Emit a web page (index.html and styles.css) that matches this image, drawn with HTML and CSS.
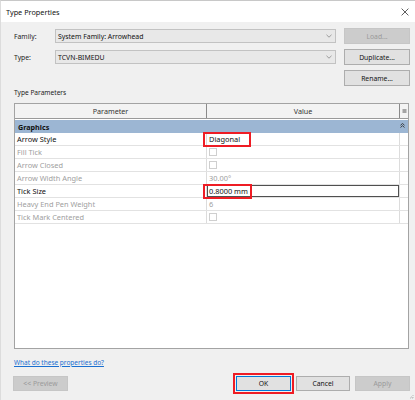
FILE: index.html
```html
<!DOCTYPE html>
<html>
<head>
<meta charset="utf-8">
<link rel="stylesheet" href="styles.css">
</head>
<body>
<div class="dialog">
  <div class="titlebar">
    <span class="title">Type Properties</span>
    <svg class="close" width="8" height="8" viewBox="0 0 8 8"><path d="M0.6 0.6 L7.4 7.4 M7.4 0.6 L0.6 7.4" stroke="#333" stroke-width="0.8" fill="none"/></svg>
  </div>

  <div class="top">
    <div class="row">
      <span class="lbl">Family:</span>
      <div class="combo"><span>System Family: Arrowhead</span><svg class="chev" width="6" height="4" viewBox="0 0 6 4"><path d="M0.5 0.8 L3 3.2 L5.5 0.8" stroke="#888" stroke-width="0.8" fill="none"/></svg></div>
      <div class="btn disabled">Load...</div>
    </div>
    <div class="row">
      <span class="lbl">Type:</span>
      <div class="combo"><span>TCVN-BIMEDU</span><svg class="chev" width="6" height="4" viewBox="0 0 6 4"><path d="M0.5 0.8 L3 3.2 L5.5 0.8" stroke="#888" stroke-width="0.8" fill="none"/></svg></div>
      <div class="btn">Duplicate...</div>
    </div>
    <div class="row">
      <span class="spacer"></span>
      <div class="btn">Rename...</div>
    </div>
  </div>

  <div class="section-label">Type Parameters</div>

  <div class="table">
    <div class="thead">
      <div class="c1">Parameter</div>
      <div class="c2">Value</div>
      <div class="c3"><svg width="5" height="4" viewBox="0 0 5 4"><path d="M0.5 1 H4.5 M0.5 3 H4.5" stroke="#444" stroke-width="0.9"/></svg></div>
    </div>
    <div class="group">
      <span>Graphics</span>
      <svg class="collapse" width="5" height="5" viewBox="0 0 5 5"><path d="M0.5 2.3 L2.5 0.5 L4.5 2.3 M0.5 4.5 L2.5 2.7 L4.5 4.5" stroke="#333" stroke-width="0.9" fill="none"/></svg>
    </div>
    <div class="tr">
      <div class="c1">Arrow Style</div>
      <div class="c2"><span class="mark m1"></span>Diagonal</div>
      <div class="c3"></div>
    </div>
    <div class="tr dis">
      <div class="c1">Fill Tick</div>
      <div class="c2"><span class="chk"></span></div>
      <div class="c3"></div>
    </div>
    <div class="tr dis">
      <div class="c1">Arrow Closed</div>
      <div class="c2"><span class="chk"></span></div>
      <div class="c3"></div>
    </div>
    <div class="tr dis">
      <div class="c1">Arrow Width Angle</div>
      <div class="c2">30.00°</div>
      <div class="c3"></div>
    </div>
    <div class="tr">
      <div class="c1">Tick Size</div>
      <div class="c2 edit"><span class="mark m2"></span>0.8000 mm</div>
      <div class="c3"></div>
    </div>
    <div class="tr dis">
      <div class="c1">Heavy End Pen Weight</div>
      <div class="c2">6</div>
      <div class="c3"></div>
    </div>
    <div class="tr dis">
      <div class="c1">Tick Mark Centered</div>
      <div class="c2"><span class="chk"></span></div>
      <div class="c3"></div>
    </div>
  </div>

  <a class="help" href="#">What do these properties do?</a>

  <div class="footer">
    <div class="btn disabled preview">&lt;&lt; Preview</div>
    <span class="spacer"></span>
    <div class="btn ok">OK</div>
    <div class="btn cancel">Cancel</div>
    <div class="btn disabled apply">Apply</div>
  </div>
  <svg class="grip" width="5" height="5" viewBox="0 0 5 5"><path d="M4 1 L4 2 M2 3 L3 3 M4 3 L4 4 M1 4 L2 4 M3 4 L4 4" stroke="#aaa" stroke-width="0.8"/></svg>
</div>
</body>
</html>
```

FILE: styles.css
```css
* { box-sizing: border-box; }
html, body {
  margin: 0;
  padding: 0;
  width: 415px;
  height: 400px;
  overflow: hidden;
  background: #f0f0f0;
}
.dialog {
  position: relative;
  width: 415px;
  height: 400px;
  background: #f0f0f0;
  font-family: "Noto Sans", "Liberation Sans", sans-serif;
  font-size: 7px;
  color: #1a1a1a;
  border-top: 1px solid #c8c8c8;
  border-left: 1px solid #dcdcdc;
  display: flex;
  flex-direction: column;
}
.titlebar {
  height: 21px;
  background: #ffffff;
  display: flex;
  align-items: center;
  justify-content: space-between;
  padding: 0 6px 0 5px;
}
.title {
  font-size: 7.3px;
  color: #111;
}
.close { display: block; margin-top: 1px; }

.top {
  padding: 6px 5px 0 13px;
  display: flex;
  flex-direction: column;
  gap: 5px;
}
.row {
  height: 16px;
  display: flex;
  align-items: center;
}
.lbl {
  width: 41px;
  color: #222;
  font-size: 6.8px;
}
.spacer { flex: 1; }
.combo {
  width: 281px;
  height: 14px;
  margin-right: 8px;
  background: #e8e8e8;
  border: 1px solid #c2c2c2;
  display: flex;
  align-items: center;
  justify-content: space-between;
  padding: 0 3px 0 2px;
  color: #111;
  font-size: 6.9px;
}
.chev { display: block; }
.btn {
  width: 66px;
  height: 16px;
  background: #e1e1e1;
  border: 1px solid #adadad;
  display: flex;
  align-items: center;
  justify-content: center;
  color: #111;
  font-size: 6.8px;
}
.btn.disabled {
  background: #cccccc;
  border-color: #c6c6c6;
  color: #9a9a9a;
}

.section-label {
  margin: 2px 0 0 13px;
  height: 10px;
  line-height: 10px;
  color: #222;
  font-size: 6.6px;
}

.table {
  margin: 5px 0 0 13px;
  width: 395px;
  height: 246px;
  background: #ffffff;
  border: 1px solid #a3a3a3;
}
.thead {
  display: flex;
  height: 15px;
  background: #f3f3f3;
  border-bottom: 1px solid #9a9a9a;
}
.thead > div {
  display: flex;
  align-items: center;
  justify-content: center;
  color: #333;
  font-size: 7.2px;
}
.thead .c1, .thead .c2 { border-right: 1px solid #8a8a8a; }
.c1 { width: 192px; flex: none; }
.c2 { width: 193px; flex: none; }
.c3 { width: 8px; flex: none; }
.thead .c3 svg { display: block; }

.group {
  margin-top: 1px;
  height: 13px;
  background: #9cb6d3;
  display: flex;
  align-items: center;
  justify-content: space-between;
  padding: 0 3px 0 3px;
  font-weight: bold;
  color: #111;
  font-size: 7.2px;
}
.collapse { display: block; margin-top: -3px; }

.tr {
  display: flex;
  height: 13px;
  border-bottom: 1px solid #e2e2e2;
  font-size: 7.4px;
}
.tr > div {
  display: flex;
  align-items: center;
}
.tr .c1 {
  padding-left: 2px;
  border-right: 1px solid #dcdcdc;
  color: #111;
}
.tr .c2 {
  position: relative;
  padding-left: 2px;
  border-right: 1px solid #dcdcdc;
  color: #111;
}
.tr.dis .c1, .tr.dis .c2 { color: #a0a0a0; }
.tr .c2.edit {
  box-shadow: inset 0 0 0 1px #505050;
}
.chk {
  display: block;
  width: 8px;
  height: 8px;
  border: 1px solid #cfcfcf;
  background: #fff;
}
.mark {
  position: absolute;
  border: 2px solid #ee1c24;
  top: -1px;
  left: -4px;
  height: 15px;
}
.m1 { width: 48px; }
.m2 { width: 49px; }

.help {
  margin: 9px 0 0 13px;
  height: 10px;
  line-height: 10px;
  color: #1a6fd0;
  text-decoration: underline;
  align-self: flex-start;
  font-size: 6.5px;
}

.footer {
  margin-top: 8px;
  padding: 0 5px 0 12px;
  display: flex;
  align-items: center;
  gap: 5px;
}
.footer .btn { height: 15px; }
.preview { width: 55px; }
.ok {
  width: 55px;
  border: 1px solid #0078d7;
  outline: 2px solid #ee1c24;
  outline-offset: 1px;
}
.cancel { width: 54px; }
.apply { width: 55px; }
.grip { position: absolute; right: 1px; bottom: 1px; }
```
